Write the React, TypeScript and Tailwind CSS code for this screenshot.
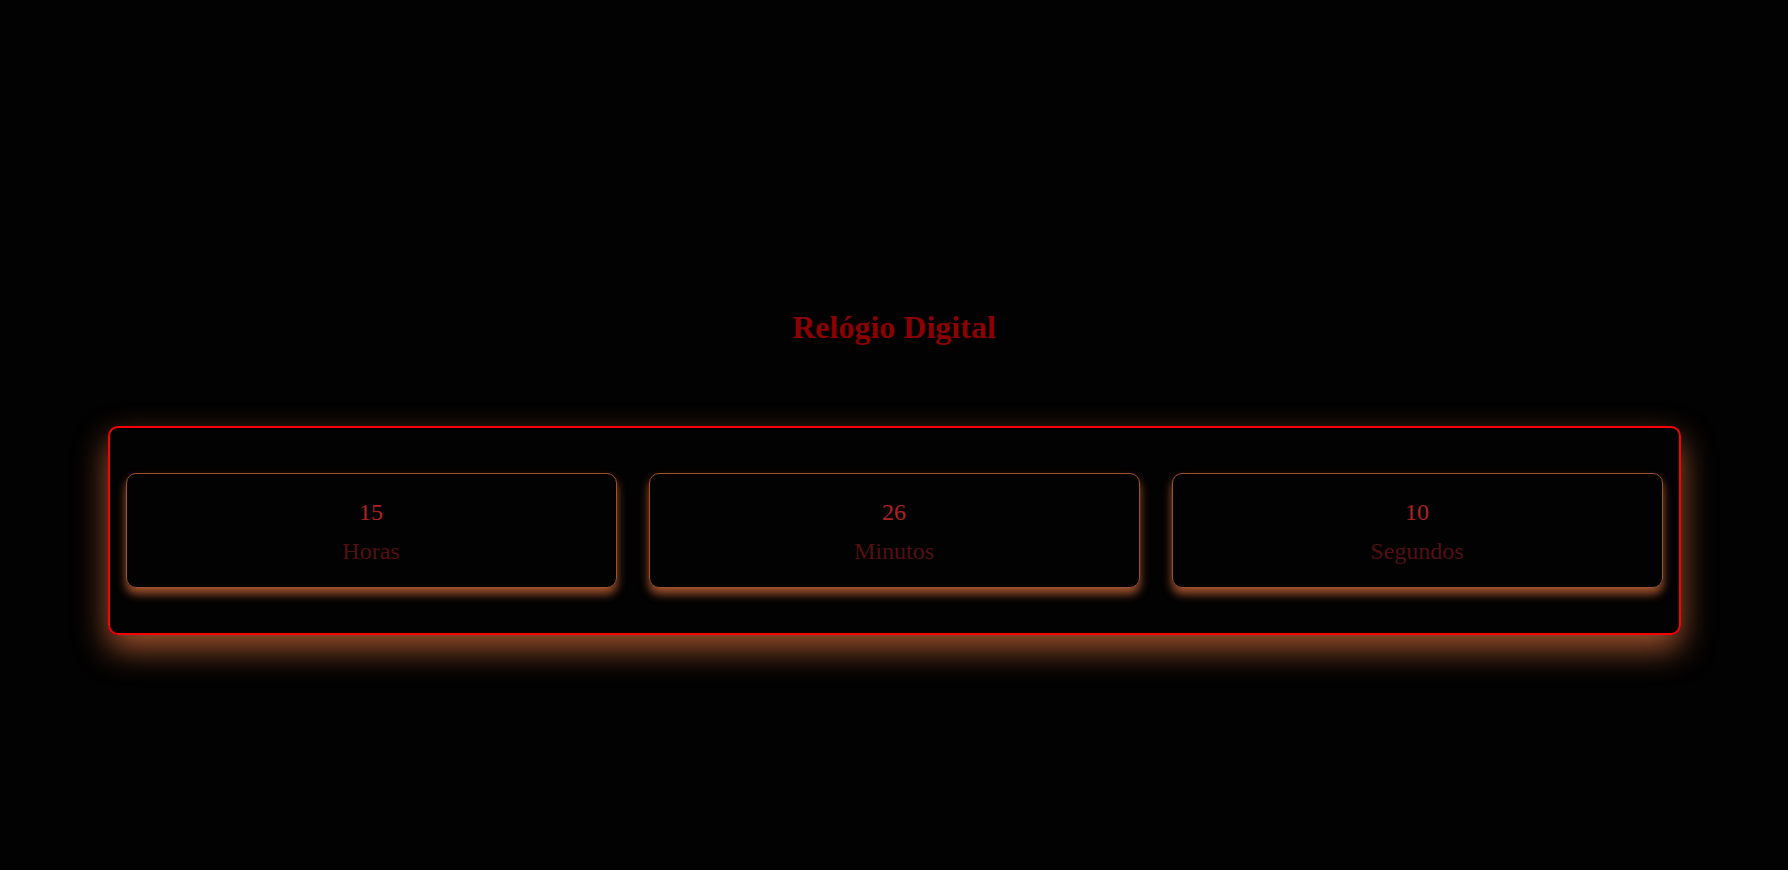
import React from "react";

type Unit = {
  value: string;
  label: string;
};

const units: Unit[] = [
  { value: "15", label: "Horas" },
  { value: "26", label: "Minutos" },
  { value: "10", label: "Segundos" },
];

const TimeCard: React.FC<Unit> = ({ value, label }) => (
  <div className="flex flex-col items-center rounded-[10px] border border-[#a0522d] pt-[24px] pb-[22px] shadow-[0_6px_10px_#a0522d]">
    <span className="text-[24px] leading-[28px] text-[#b02222]">{value}</span>
    <span className="mt-[11px] text-[24px] leading-[28px] text-[#541010]">
      {label}
    </span>
  </div>
);

export default function App() {
  return (
    <div
      className="min-h-screen bg-[#020202] flex flex-col items-center pt-[309px]"
      style={{ fontFamily: '"Liberation Serif", "Times New Roman", serif' }}
    >
      <h1 className="text-[32px] leading-[37px] font-bold text-[#8b0000]">
        Relógio Digital
      </h1>
      <div className="mt-[80px] w-[1573px] rounded-[10px] border-2 border-[#ff0000] px-4 py-[45px] grid grid-cols-3 gap-8 shadow-[0_14px_32px_#a0522d]">
        {units.map((u) => (
          <TimeCard key={u.label} value={u.value} label={u.label} />
        ))}
      </div>
    </div>
  );
}
